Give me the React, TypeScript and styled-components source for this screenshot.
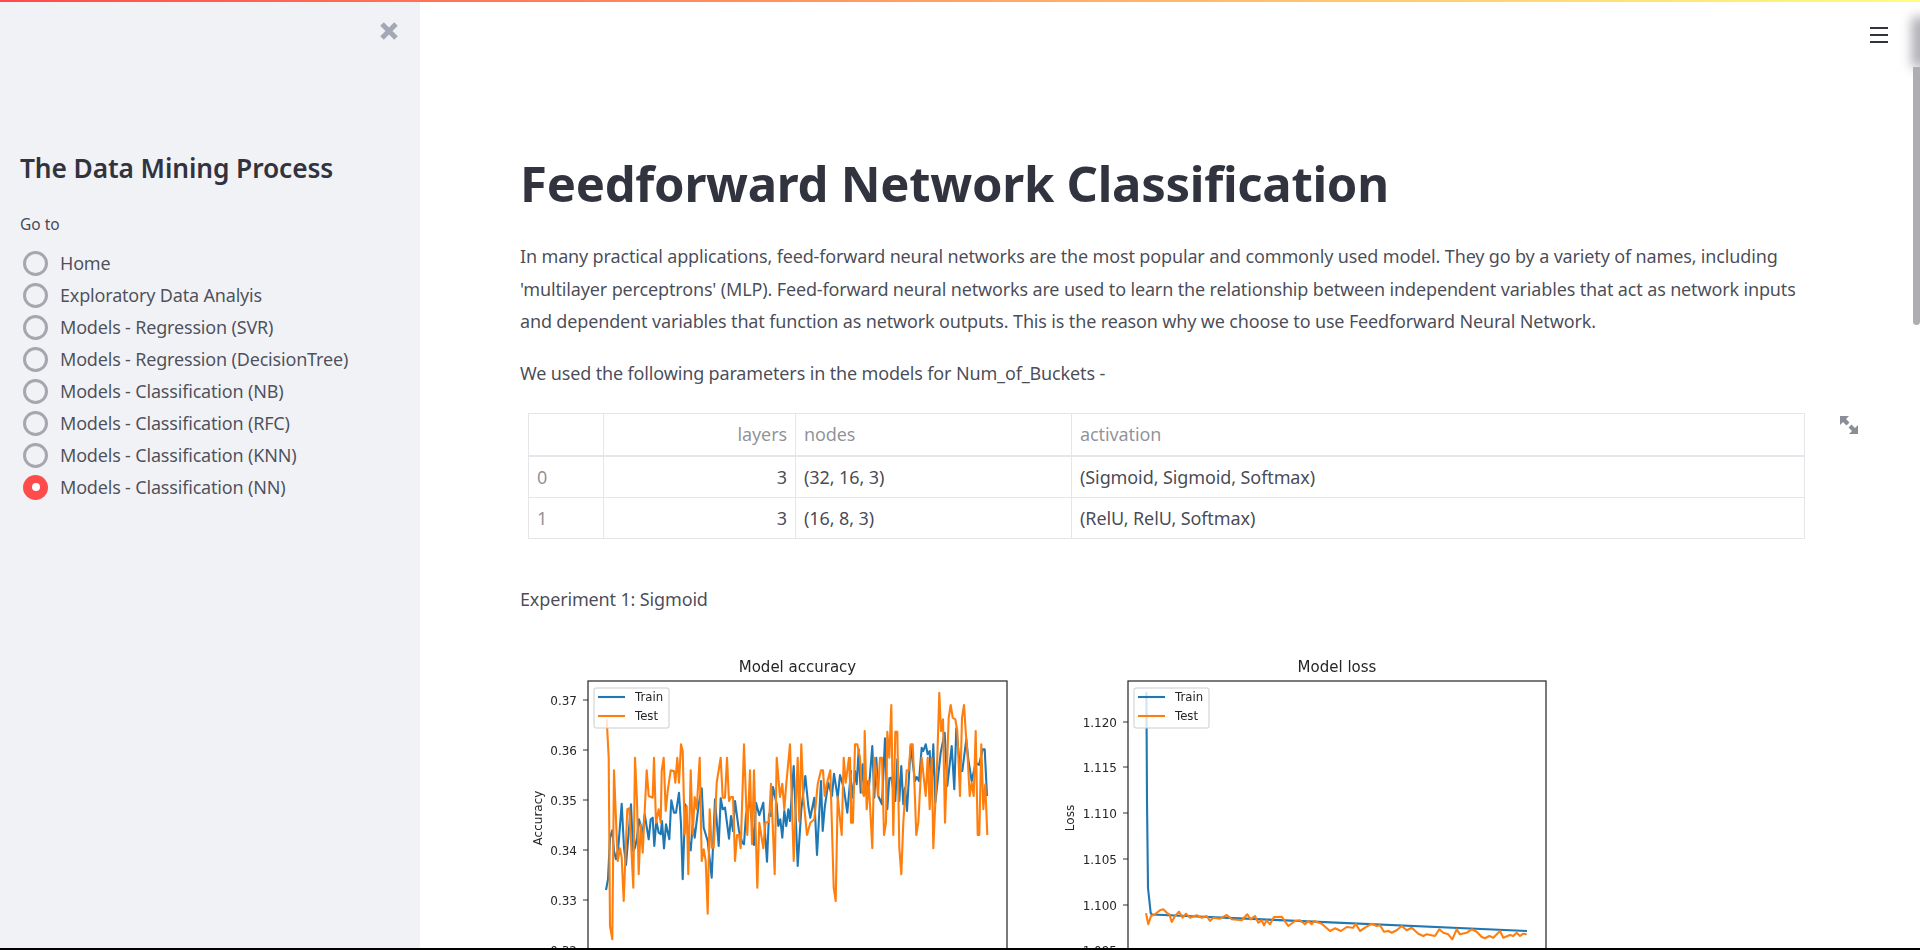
import React from "react";
import styled, { createGlobalStyle } from "styled-components";

const GlobalStyle = createGlobalStyle`
  html, body {
    margin: 0;
    padding: 0;
    overflow: hidden;
    background: #000;
  }
`;

const Page = styled.div`
  position: relative;
  display: flex;
  width: 1920px;
  height: 948px;
  overflow: hidden;
  background: #fff;
  color: #31333f;
  font-family: "Noto Sans", "Open Sans", sans-serif;
`;

// thin rainbow line along the top of the app
const Decoration = styled.div`
  position: absolute;
  top: 0;
  left: 0;
  right: 0;
  height: 2px;
  background: linear-gradient(90deg, #ff4b4b, #fffd80);
`;

const Sidebar = styled.aside`
  flex: 0 0 420px;
  box-sizing: border-box;
  padding: 21px 20px 0;
  background: #f0f2f6;
`;

const CloseRow = styled.div`
  display: flex;
  justify-content: flex-end;
  padding-right: 1px;
  height: 127px;
  color: #a3a8b4;
`;

const SideTitle = styled.h2`
  margin: 0;
  font-size: 26.3px;
  line-height: 40px;
  font-weight: 600;
  letter-spacing: -0.1px;
`;

const GoTo = styled.div`
  margin-top: 24px;
  font-size: 15.5px;
  line-height: 24px;
  color: rgba(49, 51, 63, 0.9);
`;

const RadioList = styled.div`
  display: flex;
  flex-direction: column;
  margin-top: 11px;
`;

const RadioRow = styled.label`
  display: flex;
  align-items: center;
  gap: 12px;
  height: 32px;
  padding-left: 3px;
  font-size: 18px;
  letter-spacing: -0.18px;
  color: rgba(49, 51, 63, 0.85);
`;

const RadioDot = styled.span<{ $checked?: boolean }>`
  display: flex;
  align-items: center;
  justify-content: center;
  box-sizing: border-box;
  width: 25px;
  height: 25px;
  border-radius: 50%;
  border: ${(p) => (p.$checked ? "none" : "3px solid #a6a7ae")};
  background: ${(p) => (p.$checked ? "#ff4b4b" : "#f0f2f6")};

  &::after {
    content: "";
    display: ${(p) => (p.$checked ? "block" : "none")};
    width: 8px;
    height: 8px;
    border-radius: 50%;
    background: #fff;
  }
`;

const Main = styled.main`
  flex: 1;
  min-width: 0;
  box-sizing: border-box;
  padding: 145px 0 0 100px;
`;

const Title = styled.h1`
  margin: 0;
  font-size: 49px;
  line-height: 76px;
  font-weight: 700;
  letter-spacing: -0.26px;
`;

const Para = styled.p`
  margin: 19px 0 0;
  width: 1300px;
  font-size: 18px;
  line-height: 32.5px;
  letter-spacing: -0.15px;
  color: rgba(49, 51, 63, 0.88);
`;

const TableWrap = styled.div`
  position: relative;
  margin: 24px 0 0 8px;
  width: 1277px;
`;

const ExpandButton = styled.span`
  position: absolute;
  top: 2px;
  right: -54px;
  color: #8b8e96;
`;

const DataTable = styled.table`
  width: 100%;
  table-layout: fixed;
  border-collapse: collapse;
  font-size: 18px;
  letter-spacing: -0.1px;
`;

const Th = styled.th<{ $right?: boolean }>`
  height: 42px;
  padding: 0 8px 0 8px;
  box-sizing: border-box;
  font-weight: 400;
  text-align: ${(p) => (p.$right ? "right" : "left")};
  color: rgba(49, 51, 63, 0.55);
  border: 1px solid #e6e6ea;
  border-bottom: 2px solid #e6e6ea;
`;

const Td = styled.td<{ $right?: boolean; $index?: boolean }>`
  height: 41.5px;
  padding: 0 8px 0 8px;
  box-sizing: border-box;
  text-align: ${(p) => (p.$right ? "right" : "left")};
  color: ${(p) => (p.$index ? "rgba(49, 51, 63, 0.55)" : "rgba(49, 51, 63, 0.9)")};
  border: 1px solid #e6e6ea;
`;

const Experiment = styled(Para)`
  margin-top: 44px;
`;

const Plot = styled.svg`
  display: block;
  margin-top: 35px;
  filter: blur(0.5px);
`;

const HeaderMenu = styled.span`
  position: absolute;
  top: 26px;
  right: 32px;
  color: #31333f;
`;

const ScrollFade = styled.div`
  position: absolute;
  top: 17px;
  right: -8px;
  width: 16px;
  height: 50px;
  background: #a9a9b0;
  filter: blur(6px);
`;

const ScrollThumb = styled.div`
  position: absolute;
  top: 67px;
  right: 0;
  width: 7px;
  height: 258px;
  border-radius: 0 0 4px 4px;
  background: #adadb3;
`;

const BLUE = "#1f77b4";
const ORANGE = "#ff7f0e";

// values read off the 3x crops, turned back into page coordinates
const trace = (pts: number[], ox: number, oy: number) => {
  const out: string[] = [];
  for (let i = 0; i < pts.length; i += 2) {
    out.push(`${(ox + pts[i] / 3).toFixed(1)},${(oy + pts[i + 1] / 3).toFixed(1)}`);
  }
  return out.join(" ");
};

const accTest = [
  trace([20,85,26,200,30,705,37,745,42,238,53,510,60,472,65,500,71,630,82,355,88,352,100,590,105,200,111,330,116,550,122,400,128,485,140,238,146,315,158,320,162,200,168,395,176,355,182,395,185,240,191,200,197,360,203,300,212,238,222,240,226,275,232,200,237,275,243,160,248,180,254,430,260,345,265,550,272,238,278,430,284,318,290,355,299,200,305,510,311,475,317,510,323,668,329,355,335,470,341,470,350,275,362,200,368,320], 600, 690),
  trace([0,320,6,200,12,330,18,318,24,318,30,510,36,432,42,432,47,472,57,160,67,432,75,238,81,460,87,238,97,590,103,395,115,472,121,395,132,392,138,278,149,550,155,200,165,318,172,278,178,355,184,278,195,160,206,510,218,200,223,392,229,160,235,318,246,432,256,395,268,385,278,280,288,238,294,238,299,315,305,280,316,238,326,590,332,630,338,318,350,432,356,200,362,275,372,200,380,395], 725, 690),
  trace([0,200,3,395,9,395,15,160,22,160,30,200,36,300,42,315,44,120,50,355,56,270,67,472,73,200,78,238,84,315,90,200,96,200,102,432,108,395,112,122,118,200,124,42,130,432,136,122,142,122,148,470,154,550,160,395,170,238,176,238,182,160,188,160,194,300,199,432,205,395,215,200,227,315,233,200,239,355,245,200,250,472,262,200,268,5,273,120,279,85,285,395,296,80,302,42,308,80,316,85,322,120,330,315,336,80,342,42,347,120,353,200,359,315,365,275,371,315,377,120,383,432,388,432,394,160,400,355,406,280,412,432], 850, 690),
].join(" ");

const accTrain = [
  trace([18,597,24,565,30,440,37,418,42,480,48,505,55,470,65,338,72,470,78,522,93,340,99,480,105,470,111,440,117,385,123,408,128,425,134,370,146,445,152,385,158,380,163,465,169,390,176,425,182,430,186,390,192,472,198,400,208,445,214,328,222,365,228,365,237,305,243,400,248,565,256,340,265,440,272,478,278,400,284,440,296,340,305,292,311,410,323,450,335,560,345,325,356,465,362,322,368,355], 600, 690),
  trace([0,350,12,443,18,375,24,420,30,330,42,420,52,455,57,460,63,370,75,332,87,462,93,335,103,373,115,335,120,425,126,512,132,370,138,375,144,288,155,340,160,405,166,385,172,440,178,360,184,405,190,355,195,390,206,225,218,525,229,355,241,255,250,345,256,380,268,320,276,492,288,270,293,420,299,350,310,275,321,315,327,248,338,320,345,252,356,290,367,365,378,240], 725, 690),
  trace([0,240,8,320,15,240,20,280,26,175,32,305,38,220,44,310,50,270,56,300,67,165,73,320,79,200,85,315,96,340,105,142,112,355,118,262,124,260,136,330,142,205,148,330,154,225,160,340,165,290,171,360,182,165,195,270,200,258,207,270,215,170,220,180,227,160,233,190,239,180,244,310,250,160,256,335,272,185,284,125,292,285,305,165,313,295,319,112,331,240,337,240,349,145,355,205,365,270,377,215,387,222,398,175,404,175,411,315], 850, 690),
].join(" ");

const lossTest = trace([48,97,55,130,63,105,75,100,90,88,100,85,112,97,118,100,125,123,135,105,147,92,158,110,168,98,180,110,200,103,215,110,230,105,240,120,250,110,270,113,290,102,305,115,335,118,352,100,362,115,375,105,385,125,395,118,402,133,410,118,420,130,432,108,455,107,475,135,495,120,510,118,525,130,535,120,545,130,552,120,575,128,600,150,615,142,633,150,650,138,670,140,677,128,690,150,705,140,725,128,740,135,750,133,762,152,775,150,785,155,800,148,815,135,830,148,845,140,865,158,880,165,890,160,915,165,928,145,940,155,955,160,967,175,980,145,990,160,1010,155,1025,145,1040,152,1055,168,1065,172,1078,165,1090,170,1110,150,1120,170,1140,162,1150,165,1160,155,1170,165,1180,158,1190,160], 1130, 880);

const lossTrain = "1146.4,691 1147,800 1148,887 1150.7,912 1152,913.5 1527,930";

type Tick = { y: number; label: string };

const accTicks: Tick[] = [
  { y: 699, label: "0.37" },
  { y: 749, label: "0.36" },
  { y: 799, label: "0.35" },
  { y: 849, label: "0.34" },
  { y: 899, label: "0.33" },
  { y: 949, label: "0.32" },
];

const lossTicks: Tick[] = [
  { y: 721, label: "1.120" },
  { y: 766, label: "1.115" },
  { y: 812, label: "1.110" },
  { y: 858, label: "1.105" },
  { y: 904, label: "1.100" },
  { y: 949, label: "1.095" },
];

function Chart(props: {
  left: number;
  right: number;
  title: string;
  yLabel: string;
  yLabelX: number;
  ticks: Tick[];
  train: string;
  test: string;
}) {
  const { left, right, title, yLabel, yLabelX, ticks, train, test } = props;
  const font = "DejaVu Sans, sans-serif";
  return (
    <g fontFamily={font} fill="#262626">
      <text x={(left + right) / 2} y={671} fontSize={15} textAnchor="middle">
        {title}
      </text>
      <text
        fontSize={12}
        textAnchor="middle"
        transform={`translate(${yLabelX} 817) rotate(-90)`}
      >
        {yLabel}
      </text>
      {ticks.map((t) => (
        <g key={t.label}>
          <line x1={left - 5} x2={left} y1={t.y} y2={t.y} stroke="#333" strokeWidth={1} />
          <text x={left - 11} y={t.y + 4.5} fontSize={12} textAnchor="end">
            {t.label}
          </text>
        </g>
      ))}
      <rect x={left} y={680} width={right - left} height={300} fill="#fff" stroke="#222" strokeWidth={1.2} />
      <polyline points={train} fill="none" stroke={BLUE} strokeWidth={2.1} strokeLinejoin="round" />
      <polyline points={test} fill="none" stroke={ORANGE} strokeWidth={2.1} strokeLinejoin="round" />
      <rect x={left + 6} y={687} width={75} height={40} rx={2} fill="#fff" fillOpacity={0.8} stroke="#ccc" strokeWidth={1} />
      <line x1={left + 10} x2={left + 37} y1={696} y2={696} stroke={BLUE} strokeWidth={2.1} />
      <line x1={left + 10} x2={left + 37} y1={715} y2={715} stroke={ORANGE} strokeWidth={2.1} />
      <text x={left + 47} y={700} fontSize={11.7}>Train</text>
      <text x={left + 47} y={719} fontSize={11.7}>Test</text>
    </g>
  );
}

const pages = [
  "Home",
  "Exploratory Data Analyis",
  "Models - Regression (SVR)",
  "Models - Regression (DecisionTree)",
  "Models - Classification (NB)",
  "Models - Classification (RFC)",
  "Models - Classification (KNN)",
  "Models - Classification (NN)",
];

export default function App() {
  return (
    <Page>
      <GlobalStyle />
      <Decoration />
      <Sidebar>
        <CloseRow>
          <svg width="20" height="20" viewBox="0 0 20 20">
            <path d="M3 3 L17 17 M17 3 L3 17" stroke="currentColor" strokeWidth="5" fill="none" />
          </svg>
        </CloseRow>
        <SideTitle>The Data Mining Process</SideTitle>
        <GoTo>Go to</GoTo>
        <RadioList>
          {pages.map((name) => (
            <RadioRow key={name}>
              <RadioDot $checked={name === "Models - Classification (NN)"} />
              {name}
            </RadioRow>
          ))}
        </RadioList>
      </Sidebar>
      <Main>
        <Title>Feedforward Network Classification</Title>
        <Para>
          In many practical applications, feed-forward neural networks are the most popular and
          commonly used model. They go by a variety of names, including 'multilayer perceptrons'
          (MLP). Feed-forward neural networks are used to learn the relationship between independent
          variables that act as network inputs and dependent variables that function as network
          outputs. This is the reason why we choose to use Feedforward Neural Network.
        </Para>
        <Para>We used the following parameters in the models for Num_of_Buckets -</Para>
        <TableWrap>
          <ExpandButton>
            <svg width="20" height="20" viewBox="0 0 20 20" fill="currentColor">
              <path d="M1 1 L10 1 L7 4 L10.5 7.5 L7.5 10.5 L4 7 L1 10 Z" />
              <path d="M19 19 L10 19 L13 16 L9.5 12.5 L12.5 9.5 L16 13 L19 10 Z" />
            </svg>
          </ExpandButton>
          <DataTable>
            <colgroup>
              <col width="75" />
              <col width="192" />
              <col width="276" />
              <col />
            </colgroup>
            <thead>
              <tr>
                <Th />
                <Th $right>layers</Th>
                <Th>nodes</Th>
                <Th>activation</Th>
              </tr>
            </thead>
            <tbody>
              <tr>
                <Td $index>0</Td>
                <Td $right>3</Td>
                <Td>(32, 16, 3)</Td>
                <Td>(Sigmoid, Sigmoid, Softmax)</Td>
              </tr>
              <tr>
                <Td $index>1</Td>
                <Td $right>3</Td>
                <Td>(16, 8, 3)</Td>
                <Td>(RelU, RelU, Softmax)</Td>
              </tr>
            </tbody>
          </DataTable>
        </TableWrap>
        <Experiment>Experiment 1: Sigmoid</Experiment>
        <Plot width="1050" height="340" viewBox="520 650 1050 340">
          <Chart
            left={588}
            right={1007}
            title="Model accuracy"
            yLabel="Accuracy"
            yLabelX={542}
            ticks={accTicks}
            train={accTrain}
            test={accTest}
          />
          <Chart
            left={1128}
            right={1546}
            title="Model loss"
            yLabel="Loss"
            yLabelX={1074}
            ticks={lossTicks}
            train={lossTrain}
            test={lossTest}
          />
        </Plot>
      </Main>
      <HeaderMenu>
        <svg width="18" height="18" viewBox="0 0 18 18" fill="currentColor">
          <rect x="0" y="1" width="18" height="2" />
          <rect x="0" y="8" width="18" height="2" />
          <rect x="0" y="15" width="18" height="2" />
        </svg>
      </HeaderMenu>
      <ScrollFade />
      <ScrollThumb />
    </Page>
  );
}
